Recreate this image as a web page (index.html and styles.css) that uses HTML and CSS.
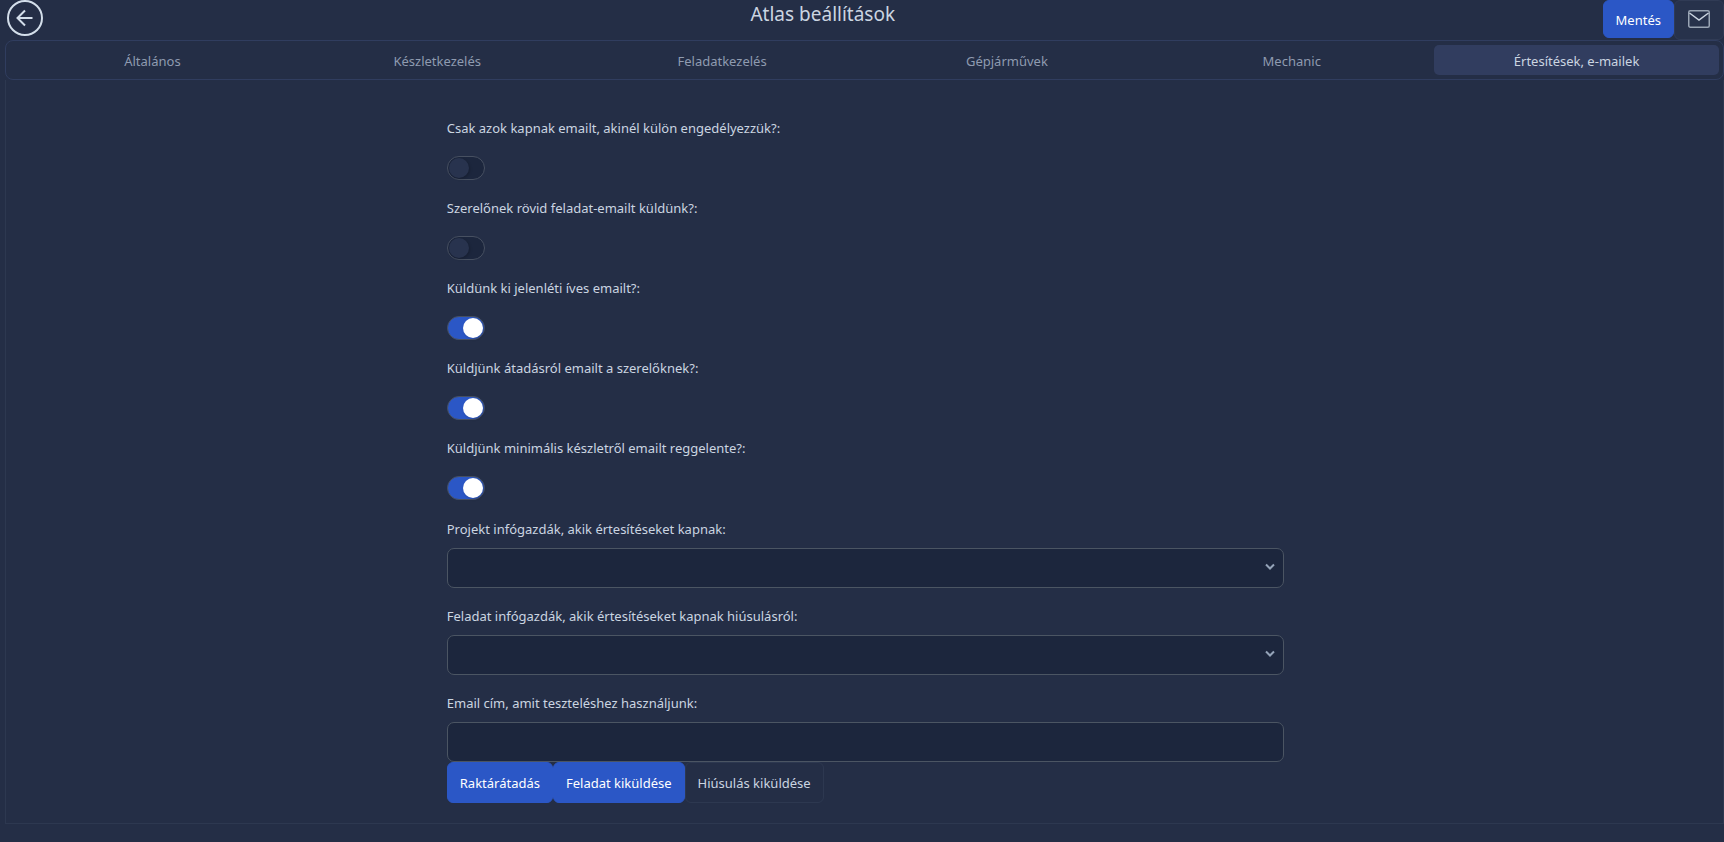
FILE: index.html
```html
<!DOCTYPE html>
<html lang="hu">
<head>
<meta charset="utf-8">
<title>Atlas beállítások</title>
<link rel="stylesheet" href="styles.css">
</head>
<body>
<header class="topbar">
  <button class="back" type="button" aria-label="Vissza">
    <svg viewBox="0 0 36 36" width="36" height="36" fill="none" stroke="currentColor">
      <circle cx="18" cy="18" r="17" stroke-width="2"/>
      <path d="M25.500 18H11M18 10.500L10.500 18L18 25.500" stroke-width="2"/>
    </svg>
  </button>
  <h1 class="title">Atlas beállítások</h1>
  <div class="actions">
    <button class="btn primary save" type="button">Mentés</button>
    <button class="mail" type="button" aria-label="E-mail">
      <svg viewBox="0 0 24 24" width="24" height="24" fill="none" stroke="currentColor">
        <rect x="1.750" y="2.750" width="20.500" height="16.500" rx="1.500" stroke-width="1.500" opacity=".7"/>
        <path d="M2.500 5L12 12L21.500 5" stroke-width="1.500"/>
      </svg>
    </button>
  </div>
</header>
<main class="main">
  <nav class="tabs">
    <a class="tab" href="#altalanos">Általános</a>
    <a class="tab" href="#keszlet">Készletkezelés</a>
    <a class="tab" href="#feladat">Feladatkezelés</a>
    <a class="tab" href="#gepjarmu">Gépjárművek</a>
    <a class="tab" href="#mechanic">Mechanic</a>
    <a class="tab active" href="#ertesites" aria-current="page">Értesítések, e-mailek</a>
  </nav>
  <section class="panel">
    <form class="form">
      <div class="toggles">
        <div class="field toggle"><label for="t1">Csak azok kapnak emailt, akinél külön engedélyezzük?:</label><input class="switch" id="t1" type="checkbox" role="switch"></div>
        <div class="field toggle"><label for="t2">Szerelőnek rövid feladat-emailt küldünk?:</label><input class="switch" id="t2" type="checkbox" role="switch"></div>
        <div class="field toggle"><label for="t3">Küldünk ki jelenléti íves emailt?:</label><input class="switch" id="t3" type="checkbox" role="switch" checked></div>
        <div class="field toggle"><label for="t4">Küldjünk átadásról emailt a szerelőknek?:</label><input class="switch" id="t4" type="checkbox" role="switch" checked></div>
        <div class="field toggle"><label for="t5">Küldjünk minimális készletről emailt reggelente?:</label><input class="switch" id="t5" type="checkbox" role="switch" checked></div>
      </div>
      <div class="inputs">
        <div class="field">
          <label for="s1">Projekt infógazdák, akik értesítéseket kapnak:</label>
          <div class="select"><select class="control" id="s1"><option></option></select>
            <svg class="chevron" viewBox="0 0 10 8" width="10" height="8" fill="none" stroke="currentColor" stroke-width="2"><path d="M1 1.500L5 5.500L9 1.500"/></svg></div>
        </div>
        <div class="field">
          <label for="s2">Feladat infógazdák, akik értesítéseket kapnak hiúsulásról:</label>
          <div class="select"><select class="control" id="s2"><option></option></select>
            <svg class="chevron" viewBox="0 0 10 8" width="10" height="8" fill="none" stroke="currentColor" stroke-width="2"><path d="M1 1.500L5 5.500L9 1.500"/></svg></div>
        </div>
        <div class="field">
          <label for="e1">Email cím, amit teszteléshez használjunk:</label>
          <input class="control" id="e1" type="email">
        </div>
      </div>
      <div class="buttons">
        <button class="btn primary" type="button">Raktárátadás</button>
        <button class="btn primary" type="button">Feladat kiküldése</button>
        <button class="btn ghost" type="button">Hiúsulás kiküldése</button>
      </div>
    </form>
  </section>
</main>
</body>
</html>
```

FILE: styles.css
```css
* { box-sizing: border-box; }
body {
  margin: 0;
  min-height: 100vh;
  background: #242e46;
  color: #cbd5e1;
  font: 13px/20px "Segoe UI", "Noto Sans", "Open Sans", sans-serif;
}
button, input, select { font: inherit; color: inherit; margin: 0; }
.topbar {
  display: flex;
  justify-content: space-between;
  align-items: start;
  height: 40px;
  padding-left: 7px;
}
.back {
  display: flex;
  padding: 0;
  border: 0;
  background: none;
  color: #d3deea;
}
.title { margin: 0; font-size: 19px; line-height: 28px; font-weight: 400; }
.actions { display: flex; align-items: start; }
.btn {
  height: 41px;
  padding: 1px 12px 0;
  border: 1px solid transparent;
  border-radius: 6px;
}
.primary { background: #2b57c6; border-color: #2b57c6; color: #fff; }
.save { height: 38px; }
.ghost { background: none; border-color: #2d3850; }
.mail {
  display: flex;
  align-items: center;
  justify-content: center;
  width: 50px;
  height: 40px;
  padding: 0;
  border: 1px solid #303b55;
  border-radius: 6px;
  background: #27324b;
}
.main { padding: 0 0 19px 5px; }
.tabs {
  display: flex;
  height: 40px;
  padding: 4px;
  border: 1px solid #303d5f;
  border-radius: 8px;
}
.tab {
  flex: 1;
  display: flex;
  align-items: center;
  justify-content: center;
  padding-top: 1px;
  border-radius: 5px;
  color: #8f9bb0;
  text-decoration: none;
}
.active { background: #313d5f; color: #cbd5e1; }
.panel {
  padding: 38px 20px 20px 22px;
  border: 1px solid #2d3850;
  border-top: 0;
}
.form { width: 50%; min-width: 320px; max-width: 840px; margin: 0 auto; }
.toggles { display: grid; gap: 18px; margin-bottom: 19px; }
.inputs { display: grid; gap: 18px; }
.field { display: flex; flex-direction: column; gap: 9px; }
.toggle { gap: 18px; }
.switch {
  appearance: none;
  display: flex;
  width: 38px;
  height: 24px;
  padding: 1px;
  border: 1px solid #475061;
  border-radius: 12px;
  background: #1c263d;
}
.switch::before {
  content: "";
  width: 20px;
  height: 20px;
  border-radius: 50%;
  background: #28334e;
  box-shadow: 1px 1px 3px rgba(0, 0, 0, .2);
}
.switch:checked { justify-content: flex-end; background: #2b57c6; }
.switch:checked::before { background: #fff; }
.select { position: relative; display: flex; }
.control {
  appearance: none;
  width: 100%;
  height: 40px;
  padding: 0 12px;
  border: 1px solid #4b5563;
  border-radius: 7px;
  background: #1c263d;
}
.chevron {
  position: absolute;
  top: 15px;
  right: 9px;
  color: #94a3b8;
  pointer-events: none;
}
.buttons { display: flex; flex-wrap: wrap; }
```
